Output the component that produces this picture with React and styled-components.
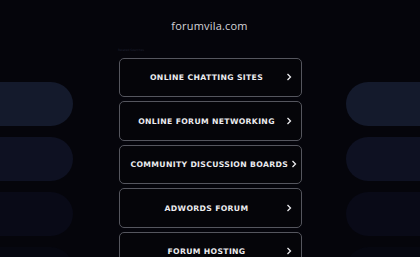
import React from 'react'
import styled, { createGlobalStyle } from 'styled-components'

const GlobalStyle = createGlobalStyle`
    html, body {
        margin: 0;
        padding: 0;
        background: #05050b;
        overflow: hidden;
    }
`

const Page = styled.div`
    display: grid;
    grid-template-columns: 73px 1fr 74px;
    width: 420px;
    height: 257px;
    overflow: hidden;
    background: #05050b;
    font-family: "DejaVu Sans", Verdana, sans-serif;
`

const SideColumn = styled.div`
    display: flex;
    flex-direction: column;
    gap: 11px;
    padding-top: 82px;
`

const Pill = styled.div`
    height: 44px;
    flex-shrink: 0;
    background: ${props => props.color};
    border-radius: ${props => props.side === 'left' ? '0 22px 22px 0' : '22px 0 0 22px'};
`

const Center = styled.div`
    display: flex;
    flex-direction: column;
    align-items: center;
`

const Domain = styled.h1`
    margin: 19px 0 0;
    font-family: "Open Sans", "DejaVu Sans", sans-serif;
    font-size: 11px;
    font-weight: 400;
    line-height: 14px;
    color: #d4d4d8;
    letter-spacing: 0.2px;
`

const RelatedLabel = styled.div`
    align-self: flex-start;
    margin: 15px 0 0 45px;
    font-size: 3px;
    line-height: 4px;
    color: #1e2030;
`

const LinkList = styled.div`
    display: flex;
    flex-direction: column;
    gap: 4px;
    margin-top: 5.5px;
    margin-left: 1px;
`

const LinkButton = styled.a`
    display: flex;
    align-items: center;
    box-sizing: border-box;
    width: 183px;
    height: 39.5px;
    padding: 0 9px 0 11px;
    border: 1px solid #55565e;
    border-radius: 5px;
    background: #050509;
    color: #ececef;
    text-decoration: none;
`

const LinkText = styled.span`
    flex: 1;
    padding-top: 1px;
    text-align: center;
    font-size: 7.7px;
    font-weight: 700;
    letter-spacing: 0.34px;
    white-space: nowrap;
`

const Chevron = styled.svg`
    width: 6px;
    height: 8px;
    margin-left: 3px;
    flex-shrink: 0;
`

const pills = ['#141a2c', '#0e1122', '#090a17', '#060710']

const links = [
    'ONLINE CHATTING SITES',
    'ONLINE FORUM NETWORKING',
    'COMMUNITY DISCUSSION BOARDS',
    'ADWORDS FORUM',
    'FORUM HOSTING',
]

const App = () => (
    <>
        <GlobalStyle />
        <Page>
            <SideColumn>
                {pills.map(c => <Pill key={c} side="left" color={c} />)}
            </SideColumn>
            <Center>
                <Domain>forumvila.com</Domain>
                <RelatedLabel>Related Searches</RelatedLabel>
                <LinkList>
                    {links.map(l => (
                        <LinkButton key={l} href="#">
                            <LinkText>{l}</LinkText>
                            <Chevron viewBox="0 0 6 8">
                                <path d="M1.5 1 L4.5 4 L1.5 7" fill="none" stroke="#ececef" strokeWidth="1.3" />
                            </Chevron>
                        </LinkButton>
                    ))}
                </LinkList>
            </Center>
            <SideColumn>
                {pills.map(c => <Pill key={c} side="right" color={c} />)}
            </SideColumn>
        </Page>
    </>
)

export default App
